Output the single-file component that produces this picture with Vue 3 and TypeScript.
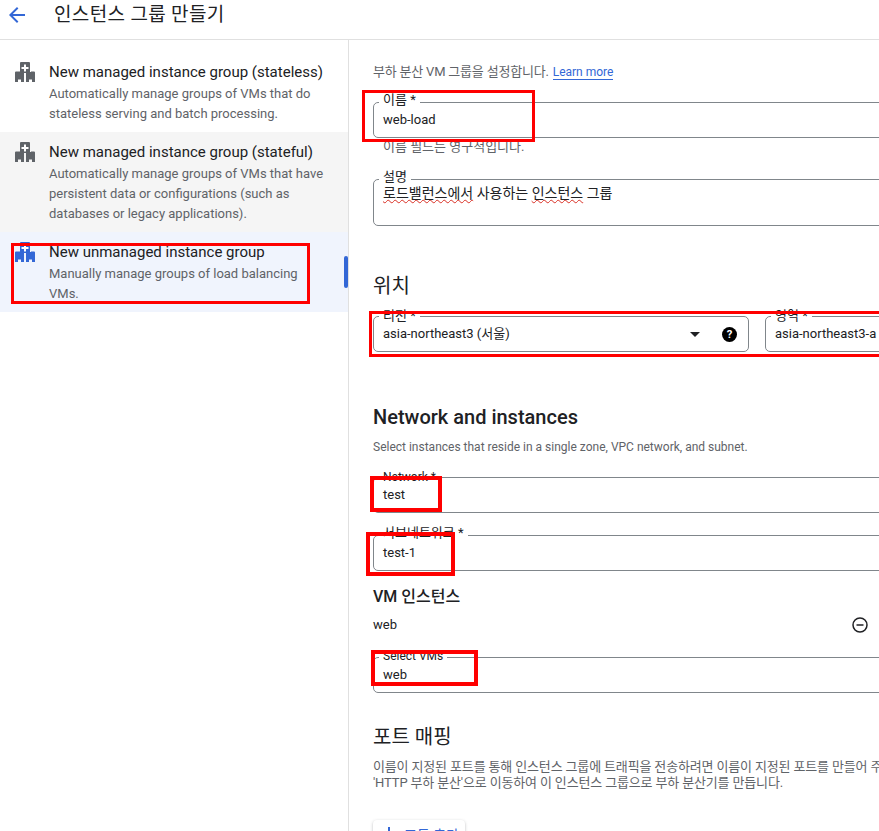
<template>
  <div class="page">
    <header class="top-bar">
      <svg class="back-icon" viewBox="0 0 16 16" width="16" height="16">
        <path d="M16 7H3.8l5.6-5.6L8 0 0 8l8 8 1.400-1.400L3.800 9H16z" />
      </svg>
      <h1>인스턴스 그룹 만들기</h1>
    </header>

    <div class="body">
      <aside class="sidebar">
        <div
          v-for="item in groupTypes"
          :key="item.title"
          class="type-item"
          :class="item.state"
        >
          <svg class="type-icon" viewBox="0 0 20 20" width="20" height="20">
            <path d="M5 1a1 1 0 0 1 1-1h8a1 1 0 0 1 1 1v9h1v-.5h3a1 1 0 0 1 1 1V20h-3v-2.500h-3V20h-3v-9H9v9H6v-2.500H3V20H0v-9.500a1 1 0 0 1 1-1h4z" />
            <path class="plus" d="M9 2.500h2V5h2.500v2H11v2.500H9V7H6.500V5H9z" />
          </svg>
          <div class="type-text">
            <div class="type-title">{{ item.title }}</div>
            <div class="type-desc">{{ item.desc }}</div>
          </div>
        </div>
      </aside>

      <main class="content">
        <p class="intro">부하 분산 VM 그룹을 설정합니다. <a>Learn more</a></p>

        <fieldset class="field name-field">
          <legend class="ko lifted">이름 *</legend>
          <div class="value">web-load</div>
        </fieldset>
        <p class="hint">이름 필드는 영구적입니다.</p>

        <fieldset class="field desc-field">
          <legend class="ko lifted">설명</legend>
          <div class="value">
            <span class="typo">로드밸런스에서</span> 사용하는 <span class="typo">인스턴스</span> 그룹
          </div>
        </fieldset>

        <h2 class="section-title location-title">위치</h2>
        <div class="location-row">
          <fieldset class="field region-field">
            <legend class="ko">리전 *</legend>
            <div class="value">asia-northeast3 (서울)</div>
            <span class="caret"></span>
            <svg class="help-icon" viewBox="0 0 16 16" width="15" height="15">
              <circle cx="8" cy="8" r="8" />
              <text x="8" y="12" text-anchor="middle">?</text>
            </svg>
          </fieldset>
          <fieldset class="field zone-field">
            <legend class="ko">영역 *</legend>
            <div class="value">asia-northeast3-a</div>
          </fieldset>
        </div>

        <h2 class="network-title">Network and instances</h2>
        <p class="network-desc">Select instances that reside in a single zone, VPC network, and subnet.</p>

        <fieldset class="field network-field">
          <legend>Network *</legend>
          <div class="value">test</div>
        </fieldset>
        <fieldset class="field subnet-field">
          <legend class="ko lifted">서브네트워크 *</legend>
          <div class="value">test-1</div>
        </fieldset>

        <h3 class="vm-title">VM 인스턴스</h3>
        <div class="vm-row">
          <span>web</span>
          <svg viewBox="0 0 16 16" width="16" height="16">
            <circle cx="8" cy="8" r="7" />
            <path d="M4.500 8h7" />
          </svg>
        </div>
        <fieldset class="field vm-field">
          <legend>Select VMs</legend>
          <div class="value">web</div>
        </fieldset>

        <h2 class="section-title port-title">포트 매핑</h2>
        <p class="port-desc">이름이 지정된 포트를 통해 인스턴스 그룹에 트래픽을 전송하려면 이름이 지정된 포트를 만들어 주세요.</p>
        <p class="port-desc">'HTTP 부하 분산'으로 이동하여 이 인스턴스 그룹으로 부하 분산기를 만듭니다.</p>
        <button class="add-port" type="button">
          <svg viewBox="0 0 10 10" width="10" height="10"><path d="M4 0h2v4h4v2H6v4H4V6H0V4h4z" /></svg>
          포트 추가
        </button>
      </main>
    </div>

    <!-- annotation boxes drawn over the capture -->
    <div
      v-for="(box, i) in marks"
      :key="i"
      class="mark"
      :style="{
        left: box.x + 'px',
        top: box.y + 'px',
        width: box.w + 'px',
        height: box.h + 'px',
        borderWidth: box.line + 'px',
      }"
    ></div>
  </div>
</template>

<script setup lang="ts">
const groupTypes = [
  {
    title: 'New managed instance group (stateless)',
    desc: 'Automatically manage groups of VMs that do stateless serving and batch processing.',
    state: '',
  },
  {
    title: 'New managed instance group (stateful)',
    desc: 'Automatically manage groups of VMs that have persistent data or configurations (such as databases or legacy applications).',
    state: 'hovered',
  },
  {
    title: 'New unmanaged instance group',
    desc: 'Manually manage groups of load balancing VMs.',
    state: 'selected',
  },
]

const marks = [
  { x: 11, y: 243, w: 299, h: 61, line: 3 },
  { x: 362, y: 90, w: 173, h: 52, line: 3 },
  { x: 369, y: 311, w: 520, h: 46, line: 3 },
  { x: 370, y: 476, w: 72, h: 36, line: 4 },
  { x: 366, y: 532, w: 89, h: 44, line: 4 },
  { x: 371, y: 650, w: 107, h: 36, line: 4 },
]
</script>

<style>
html,
body {
  margin: 0;
  background: #fff;
  overflow: hidden;
}
</style>

<style scoped>
.page {
  position: relative;
  width: 879px;
  height: 831px;
  overflow: hidden;
  font-family: Roboto, "Noto Sans CJK KR", sans-serif;
  color: #202124;
}

.top-bar {
  display: flex;
  align-items: center;
  height: 25px;
  padding: 0 0 14px 9px;
  border-bottom: 1px solid #e0e0e0;
}

.back-icon {
  margin-top: 4px;
  fill: #3367d6;
}

.top-bar h1 {
  margin: 0 0 0 29px;
  font-size: 19px;
  font-weight: 400;
  letter-spacing: 0.35px;
}

.body {
  display: flex;
  height: 791px;
}

.sidebar {
  flex: 0 0 348px;
  padding-top: 12px;
  border-right: 1px solid #e0e0e0;
}

.type-item {
  position: relative;
  display: flex;
  padding: 10px 23px 8px 15px;
}

.type-item.hovered {
  background: #f5f5f5;
}

.type-item.selected {
  background: #f0f4fd;
}

.type-item.selected::after {
  content: "";
  position: absolute;
  right: 0;
  top: 24px;
  width: 4px;
  height: 32px;
  border-radius: 2px;
  background: #3367d6;
}

.type-icon {
  flex: none;
  fill: #5f6368;
  margin-right: 14px;
}

.type-item.selected .type-icon {
  fill: #3367d6;
}

.type-icon .plus {
  fill: #fff;
}

.type-title {
  margin-bottom: 2px;
  font-size: 15px;
  line-height: 20px;
}

.type-desc {
  font-size: 13px;
  line-height: 20px;
  color: #5f6368;
}

.content {
  flex: 1;
  min-width: 0;
  padding-left: 24px;
  overflow: hidden;
}

.intro {
  margin: 24px 0 0;
  font-size: 13px;
  letter-spacing: -0.2px;
  line-height: 16px;
  color: #5f6368;
}

.intro a {
  margin-left: 1px;
  font-size: 12px;
  letter-spacing: 0;
  color: #3367d6;
  border-bottom: 1px solid #3367d6;
}

.field {
  position: relative;
  box-sizing: border-box;
  width: 620px;
  height: 43px;
  min-width: 0;
  margin: 15px 0 0;
  padding: 0 9px;
  border: 1px solid #80868b;
  border-radius: 5px;
}

.field legend {
  position: relative;
  margin-left: -4px;
  padding: 0 4px;
  font-size: 12px;
  line-height: 14px;
  color: #202124;
}

.field legend.ko {
  font-size: 13px;
}

.field legend.lifted {
  top: -2px;
}

.vm-field legend {
  top: -1px;
}

.value {
  margin-top: 1px;
  font-size: 13px;
  line-height: 20px;
}

.hint {
  margin: 1px 0 0 10px;
  font-size: 13px;
  line-height: 16px;
  color: #5f6368;
}

.desc-field {
  margin-top: 17px;
  height: 54px;
}

.desc-field .value {
  margin-top: -3px;
  font-size: 14px;
}

.typo {
  text-decoration: underline wavy #d93025 1px;
}

.section-title {
  margin: 0;
  font-size: 20px;
  font-weight: 400;
  line-height: 24px;
}

.location-title {
  margin-top: 48px;
}

.location-row {
  display: flex;
  gap: 16px;
  width: 620px;
  margin-top: 11px;
}

.location-row .field {
  margin-top: 0;
}

.region-field {
  flex: 0 0 376px;
  width: 376px;
}

.zone-field {
  flex: 0 0 220px;
  width: 220px;
}

.caret {
  position: absolute;
  right: 48px;
  top: 9px;
  border-left: 5px solid transparent;
  border-right: 5px solid transparent;
  border-top: 5px solid #202124;
}

.help-icon {
  position: absolute;
  right: 11px;
  top: 4px;
  fill: #000;
}

.help-icon text {
  fill: #fff;
  font-size: 12px;
  font-weight: 700;
}

.network-title {
  margin: 53px 0 0;
  font-size: 20px;
  font-weight: 500;
  line-height: 24px;
}

.network-desc {
  margin: 10px 0 0;
  font-size: 12px;
  line-height: 16px;
  color: #5f6368;
}

.vm-title {
  margin: 14px 0 0;
  font-size: 16px;
  font-weight: 500;
  line-height: 24px;
}

.vm-row {
  display: flex;
  align-items: center;
  justify-content: space-between;
  width: 495px;
  margin-top: 6px;
  font-size: 13px;
  line-height: 20px;
}

.vm-row svg {
  fill: none;
  stroke: #202124;
  stroke-width: 1.5;
}

.port-title {
  margin-top: 32px;
}

.port-desc {
  margin: 0;
  font-size: 13px;
  letter-spacing: -0.15px;
  line-height: 16px;
  color: #5f6368;
  white-space: nowrap;
}

.port-title + .port-desc {
  margin-top: 10px;
}

.add-port {
  display: flex;
  align-items: flex-start;
  gap: 10px;
  box-sizing: border-box;
  width: 92px;
  height: 36px;
  margin-top: 29px;
  padding: 4px 0 0 11px;
  border: 0;
  border-radius: 4px;
  background: #fff;
  box-shadow: 0 1px 3px rgba(60, 64, 67, 0.35);
  font-family: inherit;
  font-size: 14px;
  color: #3367d6;
}

.add-port svg {
  margin-top: 3px;
  fill: #3367d6;
}

.mark {
  position: absolute;
  box-sizing: border-box;
  border: 3px solid #f00;
  pointer-events: none;
}
</style>
